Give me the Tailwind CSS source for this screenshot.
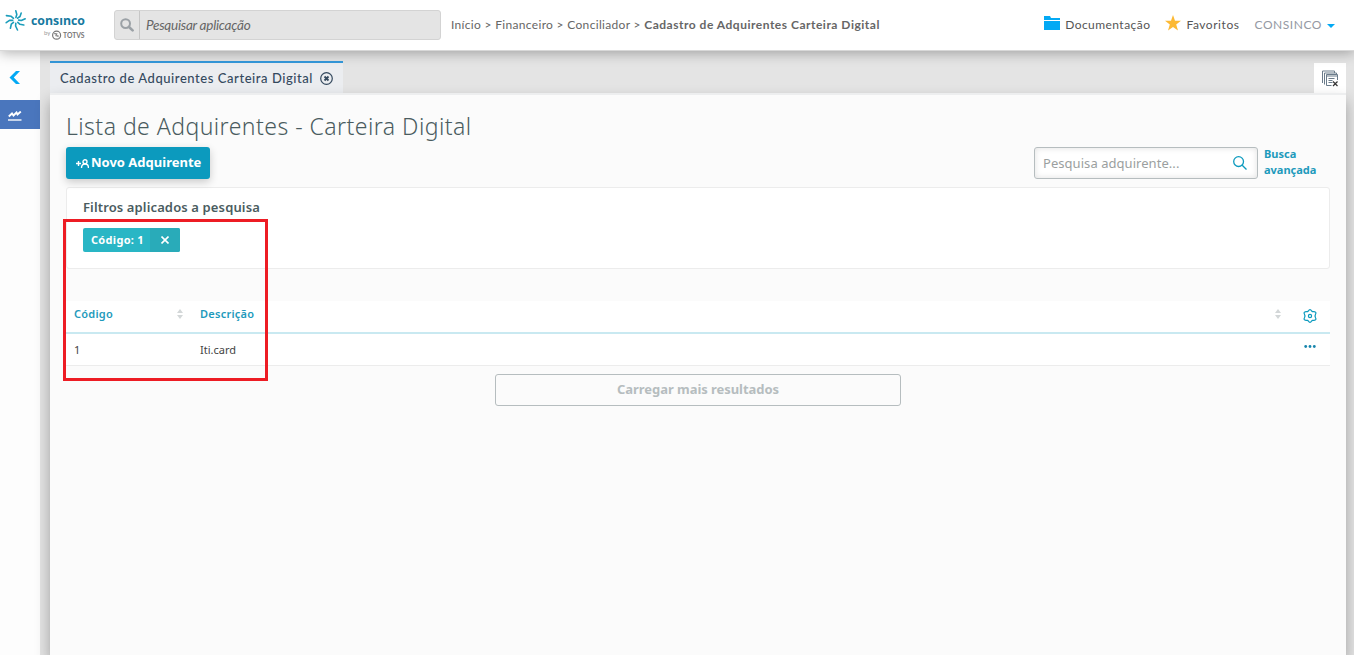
<!DOCTYPE html>
<html lang="pt-BR">
<head>
  <meta charset="UTF-8" />
  <meta name="viewport" content="width=device-width, initial-scale=1.0"/>
  <title>Consinco - Cadastro de Adquirentes Carteira Digital</title>
  <script src="https://cdn.jsdelivr.net/npm/@tailwindcss/browser@4"></script>
</head>
<body class="h-screen overflow-hidden flex flex-col bg-[#e4e4e4] font-['Lato',sans-serif] text-[#555]">

  <!-- Header -->
  <header class="relative z-20 h-[51px] shrink-0 flex items-center bg-white border-b border-[#d8d8d8] shadow-[0_2px_12px_rgba(0,0,0,0.3)]">
    <div class="w-[114px] h-[50px] shrink-0">
      <svg class="w-[114px] h-[50px]" viewBox="0 0 114 50">
        <g fill="none" stroke="#1b9dbb" stroke-width="1.6" stroke-linecap="round" stroke-linejoin="round">
          <path d="M15.9 17.4L16.800 14.5 15.8 10.7" />
          <path d="M17.6 18.2L20 16.500 21.2 13" />
          <path d="M18.6 20.1L21.3 20.500 25.2 18.8" />
          <path d="M17.8 22.3L20 24.300 23.8 25" />
          <path d="M15.8 23.2L15.6 26 17.5 30" />
          <path d="M13.5 22.3L11.300 24.2 10.4 28.2" />
          <path d="M12.7 20.4L9.9 20.2 6.2 22.700" />
          <path d="M13.5 18.3L11.2 16.3 6.400 15.6" />
        </g>
        <text x="31" y="24.5" textLength="54" lengthAdjust="spacingAndGlyphs" font-family="Open Sans, sans-serif" font-size="13" font-weight="700" fill="#17799f">consınco</text>
        <text x="44" y="35" font-family="Lato, sans-serif" font-size="6" fill="#999">by</text>
        <circle cx="56.6" cy="35.2" r="4" fill="none" stroke="#777" stroke-width="1.2" />
        <path d="M54 33.700h3.200l-1.600 2.200h3.200M54.500 32.800l4 4.400" fill="none" stroke="#777" stroke-width="0.8" />
        <text x="63" y="37.500" textLength="21.5" lengthAdjust="spacingAndGlyphs" font-family="Lato, sans-serif" font-size="7.5" font-weight="700" fill="#777">TOTVS</text>
      </svg>
    </div>

    <div class="w-[327px] h-[30px] shrink-0 flex items-center rounded-[3px] border border-[#d3d3d3] bg-[#e4e4e4]">
      <div class="w-[25px] h-full flex items-center justify-center border-r border-[#c6c6c6]">
        <svg class="w-3.5 h-3.5 text-[#9ba1a6]" viewBox="0 0 14 14" fill="none" stroke="currentColor">
          <circle cx="5.6" cy="5.6" r="4.4" stroke-width="2" />
          <path d="M9 9l3.6 3.4" stroke-width="2.6" stroke-linecap="round" />
        </svg>
      </div>
      <span class="pl-1.5 text-[13.5px] italic text-[#666] tracking-[-0.25px]">Pesquisar aplicação</span>
    </div>

    <nav class="ml-2.5 text-[12px] tracking-[0.32px] text-[#666] whitespace-nowrap">Início &gt; Financeiro &gt; Conciliador &gt; <b class="tracking-[0.51px]">Cadastro de Adquirentes Carteira Digital</b></nav>

    <div class="ml-auto mr-[19px] flex items-center text-[12px] tracking-[0.55px] text-[#555]">
      <svg class="w-4 h-3.5 mr-[5px] -mt-1" viewBox="0 0 16 14" fill="#03a9f4">
        <path d="M0 0h6l1 2h9v2H0zM0 5h16v9H0z" />
      </svg>
      <span class="tracking-[0.45px]">Documentação</span>
      <svg class="w-4 h-4 ml-[15px] mr-[5px] -mt-1" viewBox="0 0 16 16" fill="#fcb934">
        <path d="M8 0l2 5.7 6 .1-4.8 3.7 1.8 6L8 12l-5 3.5 1.8-6L0 5.800l6-.1z" />
      </svg>
      <span>Favoritos</span>
      <span class="ml-[15px] text-[#9499a3]">CONSINCO</span>
      <svg class="w-2 h-1 ml-[5px] mt-0.5" viewBox="0 0 8 4" fill="#03a9f4"><path d="M0 0h8L4 4z" /></svg>
    </div>
  </header>

  <div class="flex flex-1 min-h-0">
    <!-- Sidebar -->
    <aside class="w-10 shrink-0 bg-[#fdfdfd]">
      <div class="h-[49px] pt-5 pl-[9px]">
        <svg class="w-3 h-[13px]" viewBox="0 0 12 13" fill="#03a9f4"><path d="M7 0h4L4.800 6.500 11 13H7L0.500 6.500z" /></svg>
      </div>
      <div class="h-[29px] bg-[#4a76bd] pt-[11px] pl-2">
        <svg class="w-3.5 h-2.5" viewBox="0 0 14 10" fill="none" stroke="#fff">
          <path d="M.8 5.500L4 2.500 5.500 4.500 8.500 1.500 9.500 3.500 12.800.5" stroke-width="1.900" />
          <path d="M0 9h13.500" stroke="#c5d3ea" stroke-width="2" />
        </svg>
      </div>
    </aside>

    <div class="flex-1 min-w-0 flex flex-col pl-2.5 pr-2 pt-2.5">
      <!-- Tabs -->
      <div class="h-8 shrink-0 flex justify-between items-end">
        <div class="w-[293px] h-8 flex items-center pl-2.5 border-t-2 border-[#3498db] bg-[#ebedf0] text-[#34495e]">
          <span class="pt-px text-[13px] font-medium tracking-[0.56px] whitespace-nowrap w-[260px]">Cadastro de Adquirentes Carteira Digital</span>
          <svg class="w-[13px] h-[13px] shrink-0" viewBox="0 0 13 13" fill="none" stroke="#34495e">
            <circle cx="6.500" cy="6.500" r="5.800" stroke-width="1.200" />
            <path d="M4.500 4.500l4 4M8.500 4.500L4.500 8.500" stroke-width="1.800" />
          </svg>
        </div>
        <div class="w-8 h-[30px] flex items-center justify-center bg-white">
          <svg class="w-4 h-[17px]" viewBox="0 0 16 17" fill="none" stroke="#6b7c8b">
            <path d="M.5 13V1h12v2M2.500 14.500V3h12v2" />
            <path d="M9.500 15.500H4.500v-11h11V10M4.500 6h11" />
            <path d="M6.500 8.500h6M6.500 10.500h4M6.500 12.500h4" />
            <path d="M11 11.500l4.500 4.500M15.500 11.500L11 16" stroke="#333" stroke-width="1.200" />
          </svg>
        </div>
      </div>

      <!-- Page -->
      <main class="relative flex-1 px-4 bg-[#fbfbfb] border-t-2 border-[#edeeef] shadow-[0_8px_14px_rgba(0,0,0,0.3)] font-['Noto_Sans',sans-serif] text-[#4a5c60]">
        <h1 class="pt-[15px] h-[52px] text-[23px] leading-8 font-light tracking-[0.46px] whitespace-nowrap">Lista de Adquirentes - Carteira Digital</h1>

        <div class="flex justify-between">
          <button class="w-36 h-8 pl-2.5 flex items-center rounded-[3px] bg-[#0c9abe] text-white text-[13px] font-bold whitespace-nowrap shadow-[0_3px_8px_rgba(0,0,0,0.2)]">
            <svg class="w-[13px] h-[9px] mr-0.5 shrink-0" viewBox="0 0 13 9" fill="none" stroke="#fff" stroke-width="1.400">
              <path d="M0 4.500h5M2.500 2v5" />
              <path d="M5.500 9c0-2.500 1-4 3.500-4s3.500 1.500 3.500 4" />
              <circle cx="9" cy="2.800" r="2" />
            </svg>
            <span>Novo Adquirente</span>
          </button>
          <div class="flex">
            <div class="w-56 h-8 pl-2 pr-2.5 flex items-center justify-between rounded-[3px] border border-[#b6bdbf] bg-white shadow-[inset_0_0_6px_rgba(0,0,0,0.12)] text-[13px] text-[#9b9fa0]">
              <span class="pt-px tracking-[0.05px]">Pesquisa adquirente...</span>
              <svg class="w-3.5 h-3.5" viewBox="0 0 14 14" fill="none" stroke="#0c9abe" stroke-width="1.300">
                <circle cx="5.600" cy="5.600" r="4.900" />
                <path d="M9.200 9.200l4.300 4.300" />
              </svg>
            </div>
            <a href="#" class="w-[72px] pl-1.5 -mt-px text-[11px] leading-4 font-bold text-[#1e9abc]">Busca<br />avançada</a>
          </div>
        </div>

        <!-- Applied filters -->
        <section class="mt-2 h-[82px] pl-4 pt-[9px] rounded-[3px] border border-[#ececec] bg-white">
          <h2 class="h-[31px] text-[13px] leading-5 font-semibold tracking-[0.13px] whitespace-nowrap">Filtros aplicados a pesquisa</h2>
          <div class="w-[97px] h-6 flex rounded-[2px] overflow-hidden bg-[#29b6c5] text-white text-[11px] font-bold leading-6">
            <span class="w-[67px] pl-2 tracking-[0.3px] whitespace-nowrap">Código: 1</span>
            <span class="w-[30px] flex items-center justify-center bg-[#29abb9]">
              <svg class="w-2 h-2" viewBox="0 0 8 8" stroke="#fff" stroke-width="1.600"><path d="M.5.5l7 7M7.500.5l-7 7" /></svg>
            </span>
          </div>
        </section>

        <!-- Results -->
        <table class="mt-8 w-[1264px] table-fixed bg-white text-left text-[11px]">
          <thead class="text-[#1e9abc]">
            <tr class="h-8 border-b-2 border-[#c9e9f1]">
              <th class="w-[126px] pl-2 pr-[9px] font-semibold tracking-[0.25px]">
                <div class="flex items-center justify-between -mt-[5px]">Código
                  <svg class="w-1.5 h-2.5" viewBox="0 0 6 10" fill="#d3d7d8"><path d="M0 4l3-4 3 4zM0 6h6L3 10z" /></svg>
                </div>
              </th>
              <th class="pl-2 pr-[9px] font-semibold tracking-[0.25px]">
                <div class="flex items-center justify-between -mt-[5px]">Descrição
                  <svg class="w-1.5 h-2.5" viewBox="0 0 6 10" fill="#d3d7d8"><path d="M0 4l3-4 3 4zM0 6h6L3 10z" /></svg>
                </div>
              </th>
              <th class="w-10">
                <svg class="w-3.5 h-3.5 ml-[13px] -mt-0.5" viewBox="0 0 14 14" fill="none" stroke="#0c9abe" stroke-width="1.200" stroke-linejoin="round">
                  <path d="M5.300 2Q7-.8 8.700 2L9.300 2.700 11 2.600Q13.900 2.900 12.500 5.300L12 7 12.500 8.700Q13.900 11.100 11 11.400L9.300 11.300 8.700 12Q7 14.800 5.300 12L4.700 11.300 3 11.400Q.1 11.100 1.500 8.700L2 7 1.500 5.300Q.1 2.900 3 2.600L4.700 2.700z" />
                  <circle cx="7" cy="7" r="1.600" />
                </svg>
              </th>
            </tr>
          </thead>
          <tbody class="text-[#444]">
            <tr class="h-8 border-b border-[#ececec]">
              <td class="pl-2 pt-px">1</td>
              <td class="pl-2 pt-px">Iti.card</td>
              <td>
                <svg class="w-3 h-[3px] ml-3.5 -mt-1" viewBox="0 0 12 3" fill="#1886ad"><circle cx="1.700" cy="1.500" r="1.400" /><circle cx="6" cy="1.500" r="1.400" /><circle cx="10.300" cy="1.500" r="1.400" /></svg>
              </td>
            </tr>
          </tbody>
        </table>

        <button class="mt-2 mx-auto block w-[406px] h-8 rounded-[3px] border border-[#b6bdbf] text-[13px] font-bold tracking-[-0.05px] text-[#b6bdbf]">Carregar mais resultados</button>

        <!-- Highlight over the filter and the result -->
        <div class="absolute left-[13px] top-[124px] w-[205px] h-[162px] border-3 border-[#ed1c24]"></div>
      </main>
    </div>
  </div>

</body>
</html>
